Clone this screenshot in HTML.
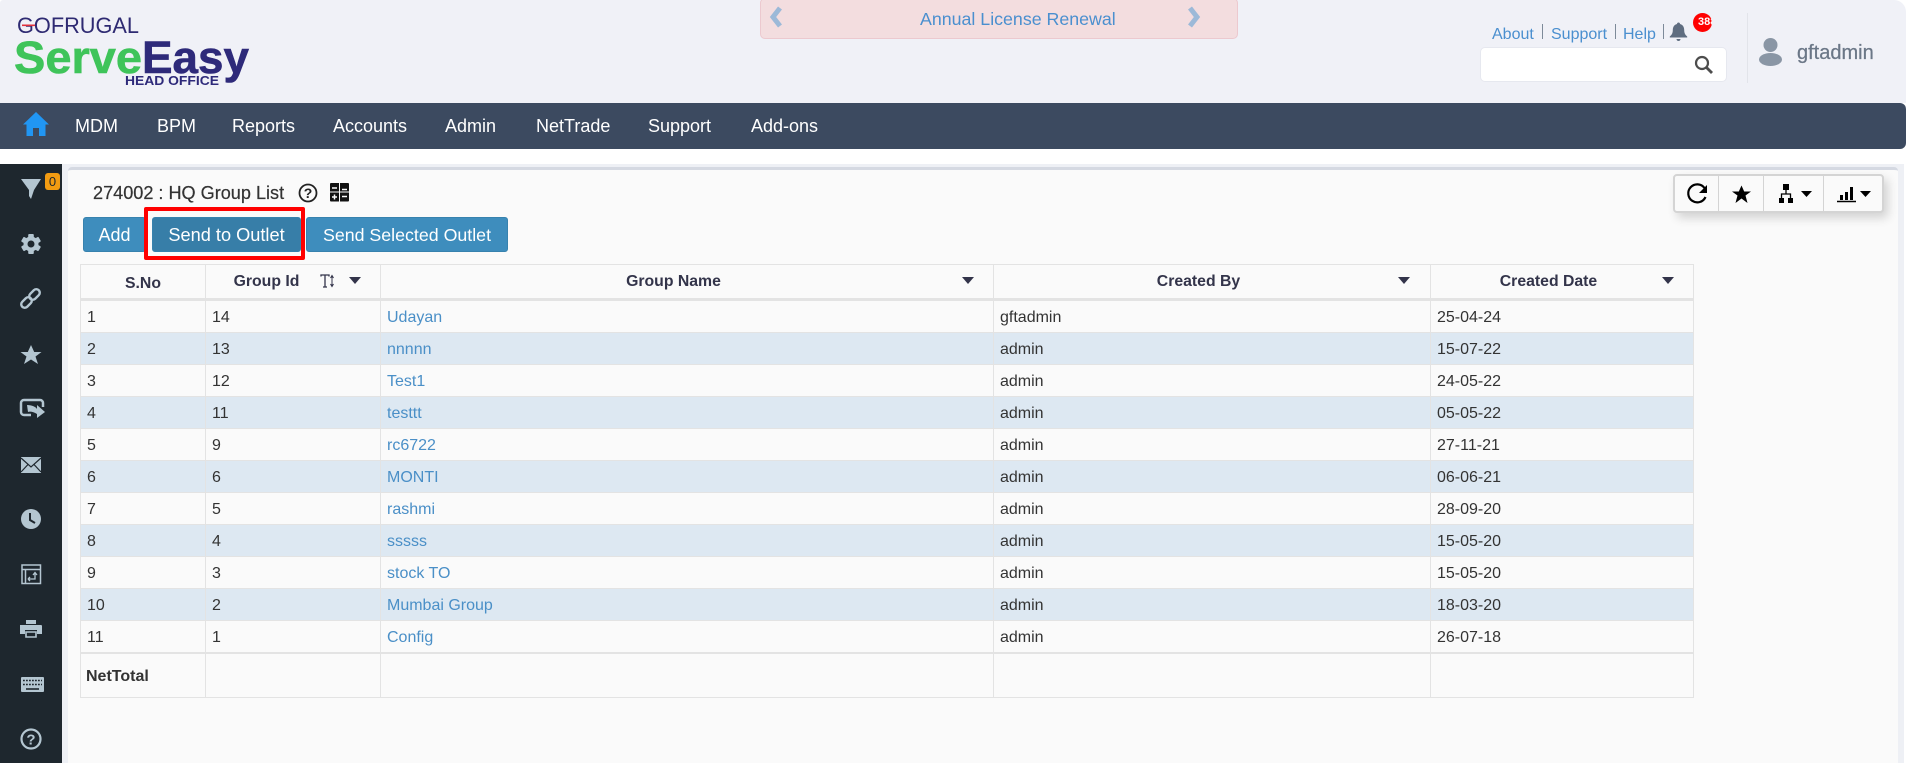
<!DOCTYPE html>
<html lang="en"><head><meta charset="utf-8"><title>HQ Group List</title>
<style>
*{box-sizing:border-box}
html,body{margin:0;padding:0;width:1908px;height:763px;overflow:hidden;background:#fff;font-family:"Liberation Sans",Arial,sans-serif;color:#333}
.a{position:absolute;white-space:nowrap}
svg{position:absolute;overflow:visible}
#hd{position:absolute;left:0;top:0;width:1906px;height:103px;background:#f0f1f7;border-radius:3px 12px 0 0}
#nav{position:absolute;left:0;top:103px;width:1906px;height:46px;background:#3c4a60;border-radius:0 6px 6px 0}
#nav span{position:absolute;top:0;line-height:46px;font-size:18px;color:#fff;white-space:nowrap}
#banner{position:absolute;left:760px;top:-2px;width:478px;height:41px;background:#f3dddf;border:1px solid #ecc9cf;border-radius:5px}
.tl{font-size:16px;color:#4a8fcf;line-height:20px;top:25px}
.sep{position:absolute;width:1px;background:#7d8a99;top:24px;height:15px}
#side{position:absolute;left:0;top:164px;width:62px;height:599px;background:#1e272e}
#wrap{position:absolute;left:62px;top:164px;height:599px;background:#eef0f5;width:1842px}
#panel{position:absolute;left:68px;top:167px;width:1830px;height:596px;background:#fafafa;border-top:3px solid #d5d9e2;border-radius:4px 4px 0 0}
.btn{position:absolute;top:217px;height:35px;line-height:34px;text-align:center;color:#fff;font-size:18px;background:#3e8dbd;border:1px solid #3782ae;border-radius:3px;white-space:nowrap}
#red{position:absolute;left:144px;top:207px;width:161px;height:53px;border:4px solid #f00;border-radius:2px}
table{position:absolute;left:80px;top:264px;width:1614px;border-collapse:separate;border-spacing:0;table-layout:fixed;font-size:16px}
th,td{border-left:1px solid #e3e3e3;border-bottom:1px solid #e3e3e3;padding:0 6px;text-align:left;color:#333;overflow:visible;white-space:nowrap;position:relative}
th:last-child,td:last-child{border-right:1px solid #e3e3e3}
thead th{height:37px;border-top:1px solid #e3e3e3;border-bottom:3px solid #e3e3e3;font-size:15.8px;color:#33344a;text-align:center;padding-top:4px}
tbody td{height:32px;padding-top:2px}
tbody tr:nth-child(even) td{background:#dde8f2}
tfoot td{height:45px;border-top:1px solid #e3e3e3;font-weight:bold;padding-left:5px;padding-top:2px}
a{color:#4a8fc7;text-decoration:none}
.car{position:absolute;top:12px;width:0;height:0;border-left:6px solid transparent;border-right:6px solid transparent;border-top:7px solid #33344a}
#tools{position:absolute;left:1673px;top:174px;width:211px;height:39px;background:#fafafa;border:2px solid #d4d4d4;border-radius:4px;box-shadow:4px 5px 10px rgba(0,0,0,.16)}
#tools i{position:absolute;top:0;width:1px;height:35px;background:#d4d4d4}
</style></head><body>

<div id="hd"></div>
<svg style="left:0;top:0" width="260" height="100" viewBox="0 0 260 100">
<text x="17" y="33" font-family="Liberation Sans,sans-serif" font-size="22" fill="#2e2a72" textLength="122" lengthAdjust="spacingAndGlyphs">GOFRUGAL</text>
<rect x="22" y="24.500" width="13" height="1.600" fill="#e0313c"/>
<text x="14" y="73" font-family="Liberation Sans,sans-serif" font-weight="bold" font-size="45" fill="#3fc45a" stroke="#3fc45a" stroke-width=".6" textLength="128" lengthAdjust="spacingAndGlyphs">Serve</text>
<text x="142" y="73" font-family="Liberation Sans,sans-serif" font-weight="bold" font-size="45" fill="#2e2a7a" stroke="#2e2a7a" stroke-width=".6" textLength="107" lengthAdjust="spacingAndGlyphs">Easy</text>
<text x="125" y="85" font-family="Liberation Sans,sans-serif" font-weight="bold" font-size="12.5" fill="#2e2a7a" textLength="94" lengthAdjust="spacingAndGlyphs">HEAD OFFICE</text>
</svg>

<div id="banner"></div>
<svg style="left:769px;top:6px" width="16" height="24" viewBox="0 0 16 24"><path d="M11 2 L4 11 L11 20" fill="none" stroke="#9cb9d8" stroke-width="5"/></svg>
<svg style="left:1187px;top:6px" width="16" height="24" viewBox="0 0 16 24"><path d="M3 2 L10 11 L3 20" fill="none" stroke="#9cb9d8" stroke-width="5"/></svg>
<div class="a" style="left:920px;top:7px;line-height:24px;font-size:17.800px;color:#4a8fcf">Annual License Renewal</div>

<span class="a tl" style="left:1492px">About</span><i class="sep" style="left:1542px"></i>
<span class="a tl" style="left:1551px">Support</span><i class="sep" style="left:1615px"></i>
<span class="a tl" style="left:1623px">Help</span><i class="sep" style="left:1663px"></i>
<svg style="left:1669px;top:21px" width="19" height="21" viewBox="0 0 19 21"><path d="M9.500 1.500c1 0 1.500.7 1.500 1.500 3 .8 4.200 3.200 4.200 6 0 3.500 1.300 5 3 6.500v1H.8v-1c1.700-1.500 3-3 3-6.500 0-2.800 1.200-5.200 4.200-6 0-.8.500-1.500 1.500-1.500z" fill="#5f6d80"/><path d="M7.500 18h4c0 1.200-.9 2-2 2s-2-.8-2-2z" fill="#5f6d80"/></svg>
<div class="a" style="left:1693px;top:13px;width:19px;height:19px;border-radius:50%;background:#f00;color:#fff;font-size:11px;font-weight:bold;line-height:19px;text-align:left;padding-left:5px;overflow:hidden">388</div>
<div class="a" style="left:1480px;top:47px;width:247px;height:35px;background:#fff;border:1px solid #e6e8ef;border-radius:5px"></div>
<svg style="left:1694px;top:55px" width="20" height="20" viewBox="0 0 20 20"><circle cx="8" cy="8" r="6" fill="none" stroke="#4d4d4d" stroke-width="2.200"/><path d="M12.500 12.500L18 18" stroke="#4d4d4d" stroke-width="2.800"/></svg>
<i class="a" style="left:1747px;top:13px;width:1px;height:70px;background:#e2e4ea"></i>
<svg style="left:1759px;top:38px" width="23" height="28" viewBox="0 0 23 28"><circle cx="11.500" cy="7" r="7" fill="#8a96a5"/><ellipse cx="11.500" cy="21.500" rx="11.500" ry="6.500" fill="#8a96a5"/></svg>
<div class="a" style="left:1797px;top:41px;line-height:24px;font-size:20px;color:#6b7787;-webkit-text-stroke:.25px #6b7787">gftadmin</div>

<div id="nav">
<svg style="left:23px;top:9px" width="26" height="24" viewBox="0 0 26 24"><path d="M13 0L26 12.500H22.500V24H16V16H10V24H3.500V12.500H0z" fill="#2196f3"/></svg>
<span style="left:75px">MDM</span><span style="left:157px">BPM</span><span style="left:232px">Reports</span><span style="left:333px">Accounts</span><span style="left:445px">Admin</span><span style="left:536px">NetTrade</span><span style="left:648px">Support</span><span style="left:751px">Add-ons</span>
</div>

<div id="wrap"></div>
<div id="side"></div>
<div id="panel"></div>

<div class="a" style="left:45px;top:173px;width:15px;height:17px;background:#f39c12;border-radius:3px;color:#1e272e;font-size:13px;line-height:17px;text-align:center">0</div>
<svg style="left:0;top:164px" width="62" height="599" viewBox="0 164 62 599">
<g fill="#b4c6d1">
<path d="M21 179H41L34 190L31 199L29 196V190z"/>
<circle cx="31" cy="244" r="7.500"/>
<g transform="translate(31 244)"><rect x="-2.800" y="-10" width="5.600" height="5" rx="1"/><rect x="-2.800" y="-10" width="5.600" height="5" rx="1" transform="rotate(60)"/><rect x="-2.800" y="-10" width="5.600" height="5" rx="1" transform="rotate(120)"/><rect x="-2.800" y="-10" width="5.600" height="5" rx="1" transform="rotate(180)"/><rect x="-2.800" y="-10" width="5.600" height="5" rx="1" transform="rotate(240)"/><rect x="-2.800" y="-10" width="5.600" height="5" rx="1" transform="rotate(300)"/></g>
<circle cx="31" cy="244" r="3.500" fill="#1e272e"/>
<g fill="none" stroke="#b4c6d1" stroke-width="2.400"><rect x="20.500" y="299" width="12" height="7" rx="3.500" transform="rotate(-45 26.500 302.500)"/><rect x="28.500" y="291" width="12" height="7" rx="3.500" transform="rotate(-45 34.500 294.500)"/></g>
<path d="M31 345L34.200 352H41.500L35.500 356.500L38 364L31 359.500L24 364L26.500 356.500L20.500 352H27.800z"/>
<path d="M24 400H40A3 3 0 0 1 43 403V407" fill="none" stroke="#b4c6d1" stroke-width="2.500"/><path d="M24 400A3 3 0 0 0 21 403V412A3 3 0 0 0 24 415H31" fill="none" stroke="#b4c6d1" stroke-width="2.500"/>
<path d="M27 405C32 405 36 407 37 409V405L45 412L37 418V414C34 412 30 411 28 412z"/>
<path d="M21 457H41V473H21z"/><path d="M21 458L31 467L41 458M21 472L28 464.500M41 472L34 464.500" fill="none" stroke="#1e272e" stroke-width="1.200"/>
<circle cx="31" cy="519" r="10"/><path d="M30 513V520L35 523" fill="none" stroke="#1e272e" stroke-width="2"/>
<rect x="22" y="565" width="18.500" height="18.500" fill="none" stroke="#b4c6d1" stroke-width="1.500"/><path d="M22 569.500H40.500M25.500 569.500V583" fill="none" stroke="#b4c6d1" stroke-width="1.500"/>
<path d="M28 579H35V573M33 575L35 572.500L37 575M28 579L30 577M28 579L30 581" fill="none" stroke="#b4c6d1" stroke-width="1.300"/>
<path d="M26 620H36V624H26z"/><path d="M20 625H41A1 1 0 0 1 42 626V634H37V630H25V634H20z"/><path d="M26 632H36V637H26z" fill="none" stroke="#b4c6d1" stroke-width="1.600"/>
<rect x="21" y="677" width="23" height="15" rx="1"/>
<path d="M23 680.500H42M23 684.500H42" stroke="#1e272e" stroke-width="1.600" stroke-dasharray="1.800 1.200" fill="none"/><path d="M26 689H39" stroke="#1e272e" stroke-width="1.600"/>
<circle cx="31" cy="739" r="9.500" fill="none" stroke="#b4c6d1" stroke-width="2.200"/>
<text x="31" y="744.500" text-anchor="middle" font-family="Liberation Sans,sans-serif" font-weight="bold" font-size="15">?</text>
</g></svg>

<div class="a" style="left:93px;top:182px;line-height:22px;font-size:18.100px;color:#333;-webkit-text-stroke:.2px #333">274002 : HQ Group List</div>
<svg style="left:298px;top:183px" width="20" height="20" viewBox="0 0 20 20"><circle cx="10" cy="10" r="8.500" fill="none" stroke="#222" stroke-width="1.800"/><text x="10" y="15" text-anchor="middle" font-family="Liberation Sans,sans-serif" font-weight="bold" font-size="14" fill="#222">?</text></svg>
<svg style="left:330px;top:183px" width="19" height="19" viewBox="0 0 19 19"><rect width="19" height="18.500" rx="1" fill="#111"/><path d="M9.500 0V19M0 9H19" stroke="#fafafa" stroke-width="1"/><path d="M2 5H7M12 6.500H17M12 13.500H17M2 14H7M4.500 11.500V16.500" stroke="#fafafa" stroke-width="1.500"/></svg>

<div class="btn" style="left:83px;width:63px">Add</div>
<div class="btn" style="left:152px;width:149px;background:#377ea8;font-size:18.200px">Send to Outlet</div>
<div class="btn" style="left:306px;width:202px;font-size:17.800px">Send Selected Outlet</div>
<div id="red"></div>

<div id="tools"><i style="left:43px"></i><i style="left:88px"></i><i style="left:148px"></i></div>
<svg style="left:1674px;top:174px" width="210" height="39" viewBox="0 0 210 39">
<path d="M30.500 14A9 9 0 1 0 31.500 23" fill="none" stroke="#000" stroke-width="2.200"/><path d="M25 19H33V11z" fill="#000"/>
<path d="M67.500 11.500L70.200 17.500H77L71.500 21.500L73.500 29L67.500 24.500L61.500 29L63.500 21.500L58 17.500H64.800z" fill="#000"/>
<path d="M109 10h6v6h-6zM105 24h5v5h-5zM114 24h5v5h-5z" fill="#000"/><path d="M107.500 24v-4h9v4M112 16v4" fill="none" stroke="#000" stroke-width="1.300"/>
<path d="M127 17h11L132.500 23z" fill="#000"/>
<path d="M163 27.500H182" stroke="#000" stroke-width="1.500"/><path d="M166 21h3v5h-3zM171 18h3v8h-3zM176 13h3v13h-3z" fill="#000"/>
<path d="M186 17h11L191.500 23z" fill="#000"/>
</svg>

<table>
<colgroup><col style="width:125px"><col style="width:175px"><col style="width:613px"><col style="width:437px"><col style="width:264px"></colgroup>
<thead><tr>
<th>S.No</th>
<th style="padding-top:0;padding-right:59px">Group Id<svg style="left:114px;top:9px" width="16" height="15" viewBox="0 0 16 15"><path d="M1 2.500V1H9V2.500M5 1V13M3 13H7" fill="none" stroke="#33344a" stroke-width="1.300"/><path d="M12 2V12M10.500 4L12 1.500L13.500 4M10.500 10L12 12.500L13.500 10" fill="none" stroke="#33344a" stroke-width="1"/></svg><i class="car" style="left:143px"></i></th>
<th style="padding-top:0;padding-right:33px">Group Name<i class="car" style="left:581px"></i></th>
<th style="padding-top:0;padding-right:33px">Created By<i class="car" style="left:404px"></i></th>
<th style="padding-top:0;padding-right:33px">Created Date<i class="car" style="left:231px"></i></th>
</tr></thead>
<tbody>
<tr><td>1</td><td>14</td><td><a>Udayan</a></td><td>gftadmin</td><td>25-04-24</td></tr>
<tr><td>2</td><td>13</td><td><a>nnnnn</a></td><td>admin</td><td>15-07-22</td></tr>
<tr><td>3</td><td>12</td><td><a>Test1</a></td><td>admin</td><td>24-05-22</td></tr>
<tr><td>4</td><td>11</td><td><a>testtt</a></td><td>admin</td><td>05-05-22</td></tr>
<tr><td>5</td><td>9</td><td><a>rc6722</a></td><td>admin</td><td>27-11-21</td></tr>
<tr><td>6</td><td>6</td><td><a>MONTI</a></td><td>admin</td><td>06-06-21</td></tr>
<tr><td>7</td><td>5</td><td><a>rashmi</a></td><td>admin</td><td>28-09-20</td></tr>
<tr><td>8</td><td>4</td><td><a>sssss</a></td><td>admin</td><td>15-05-20</td></tr>
<tr><td>9</td><td>3</td><td><a>stock TO</a></td><td>admin</td><td>15-05-20</td></tr>
<tr><td>10</td><td>2</td><td><a>Mumbai Group</a></td><td>admin</td><td>18-03-20</td></tr>
<tr><td>11</td><td>1</td><td><a>Config</a></td><td>admin</td><td>26-07-18</td></tr>
</tbody>
<tfoot><tr><td>NetTotal</td><td></td><td></td><td></td><td></td></tr></tfoot>
</table>
</body></html>
